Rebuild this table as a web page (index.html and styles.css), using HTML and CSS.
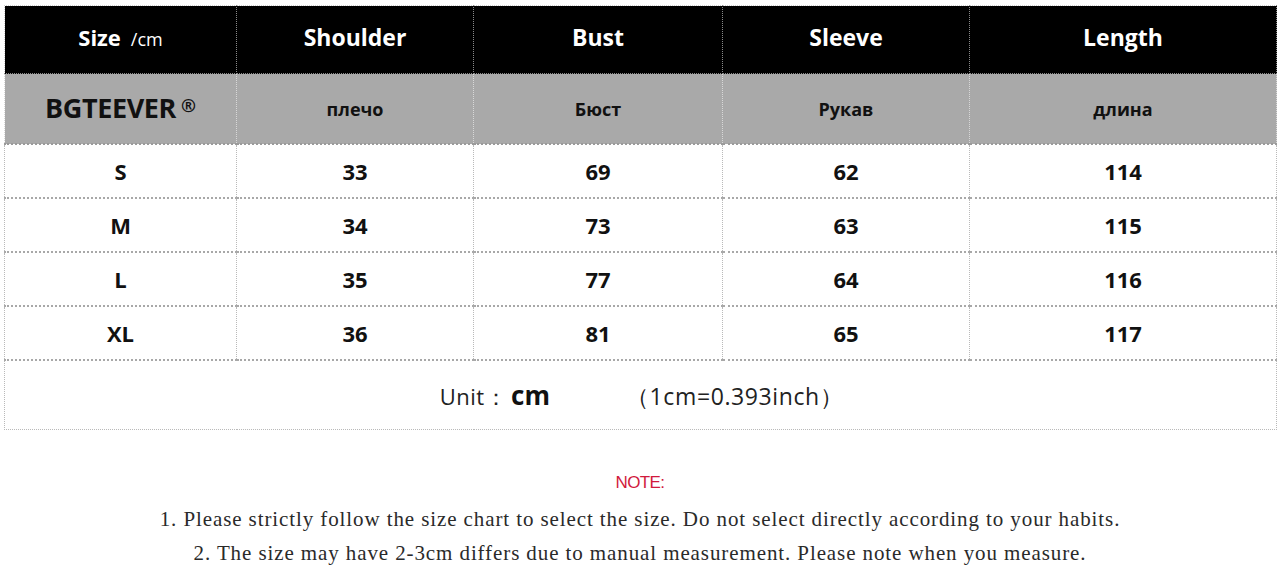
FILE: index.html
```html
<!DOCTYPE html>
<html>
<head>
<meta charset="utf-8">
<link rel="stylesheet" href="styles.css">
</head>
<body>
<table class="chart">
  <colgroup>
    <col class="c1"><col class="c2"><col class="c3"><col class="c4"><col class="c5">
  </colgroup>
  <tr class="head">
    <td><span class="size">Size</span><span class="unit-small">/cm</span></td>
    <td>Shoulder</td>
    <td>Bust</td>
    <td>Sleeve</td>
    <td>Length</td>
  </tr>
  <tr class="sub">
    <td class="brand">BGTEEVER<span class="reg">®</span></td>
    <td>плечо</td>
    <td>Бюст</td>
    <td>Рукав</td>
    <td>длина</td>
  </tr>
  <tr class="data"><td>S</td><td>33</td><td>69</td><td>62</td><td>114</td></tr>
  <tr class="data"><td>M</td><td>34</td><td>73</td><td>63</td><td>115</td></tr>
  <tr class="data"><td>L</td><td>35</td><td>77</td><td>64</td><td>116</td></tr>
  <tr class="data"><td>XL</td><td>36</td><td>81</td><td>65</td><td>117</td></tr>
  <tr class="unitrow">
    <td colspan="5"><span class="u-label">Unit：</span><span class="u-cm">cm</span><span class="u-conv">（1cm=0.393inch）</span></td>
  </tr>
</table>
<div class="notes">
  <div class="note-title">NOTE:</div>
  <p class="note-line">1. Please strictly follow the size chart to select the size. Do not select directly according to your habits.</p>
  <p class="note-line">2. The size may have 2-3cm differs due to manual measurement. Please note when you measure.</p>
</div>
</body>
</html>
```
FILE: styles.css
```css
html, body {
  margin: 0;
  padding: 0;
  background: #ffffff;
}
body {
  font-family: "Open Sans", "Liberation Sans", sans-serif;
  width: 1280px;
  height: 568px;
  overflow: hidden;
}
.chart {
  margin: 5px 0 0 4px;
  width: 1272px;
  border-collapse: collapse;
  table-layout: fixed;
}
.c1 { width: 232px; }
.c2 { width: 237px; }
.c3 { width: 249px; }
.c4 { width: 247px; }
.c5 { width: 307px; }
.chart td {
  border: 1px dotted #b9b9b9;
  text-align: center;
  vertical-align: middle;
  padding: 0;
}
.head td {
  background: #000;
  color: #fff;
  height: 61px;
  padding-bottom: 6px;
  font-weight: 700;
  font-size: 23px;
  border-color: #8a8a8a;
  border-top: 1px dotted #cfcfcf;
}
.head td:first-child { border-left: 1px dotted #cfcfcf; }
.head .size { font-size: 22px; }
.head .unit-small { font-weight: 400; font-size: 18px; margin-left: 10px; }
.sub td {
  background: #a9a9a9;
  color: #111;
  height: 67px;
  font-weight: 700;
  font-size: 18px;
  border-left-color: #d8d8d8;
  border-right-color: #d8d8d8;
  border-bottom: 2px dotted #9a9a9a;
}
.sub td.brand {
  font-size: 27px;
  color: #111;
  letter-spacing: -0.4px;
  padding-bottom: 2px;
}
.reg { font-size: 18px; vertical-align: 6px; margin-left: 5px; letter-spacing: 0; }
.data td {
  height: 52px;
  font-weight: 700;
  font-size: 22px;
  color: #111;
  border-bottom: 2px dotted #a8a8a8;
}
.unitrow td {
  height: 68px;
  font-size: 22px;
  color: #222;
  padding-left: 2px;
}
.u-label { letter-spacing: 0.5px; }
.u-cm { font-weight: 700; font-size: 26px; color: #111; margin-left: 4px; }
.u-conv { margin-left: 76px; font-size: 23px; letter-spacing: 0.6px; }
.notes {
  text-align: center;
  margin-top: 44px;
}
.note-title {
  color: #d11a3c;
  font-family: "Liberation Sans", sans-serif;
  font-size: 17px;
  letter-spacing: -0.6px;
  line-height: 18px;
  margin-bottom: 10px;
}
.note-line {
  margin: 0;
  font-family: "Liberation Serif", serif;
  font-size: 21px;
  letter-spacing: 0.9px;
  line-height: 34px;
  color: #2a2a2a;
}
```
